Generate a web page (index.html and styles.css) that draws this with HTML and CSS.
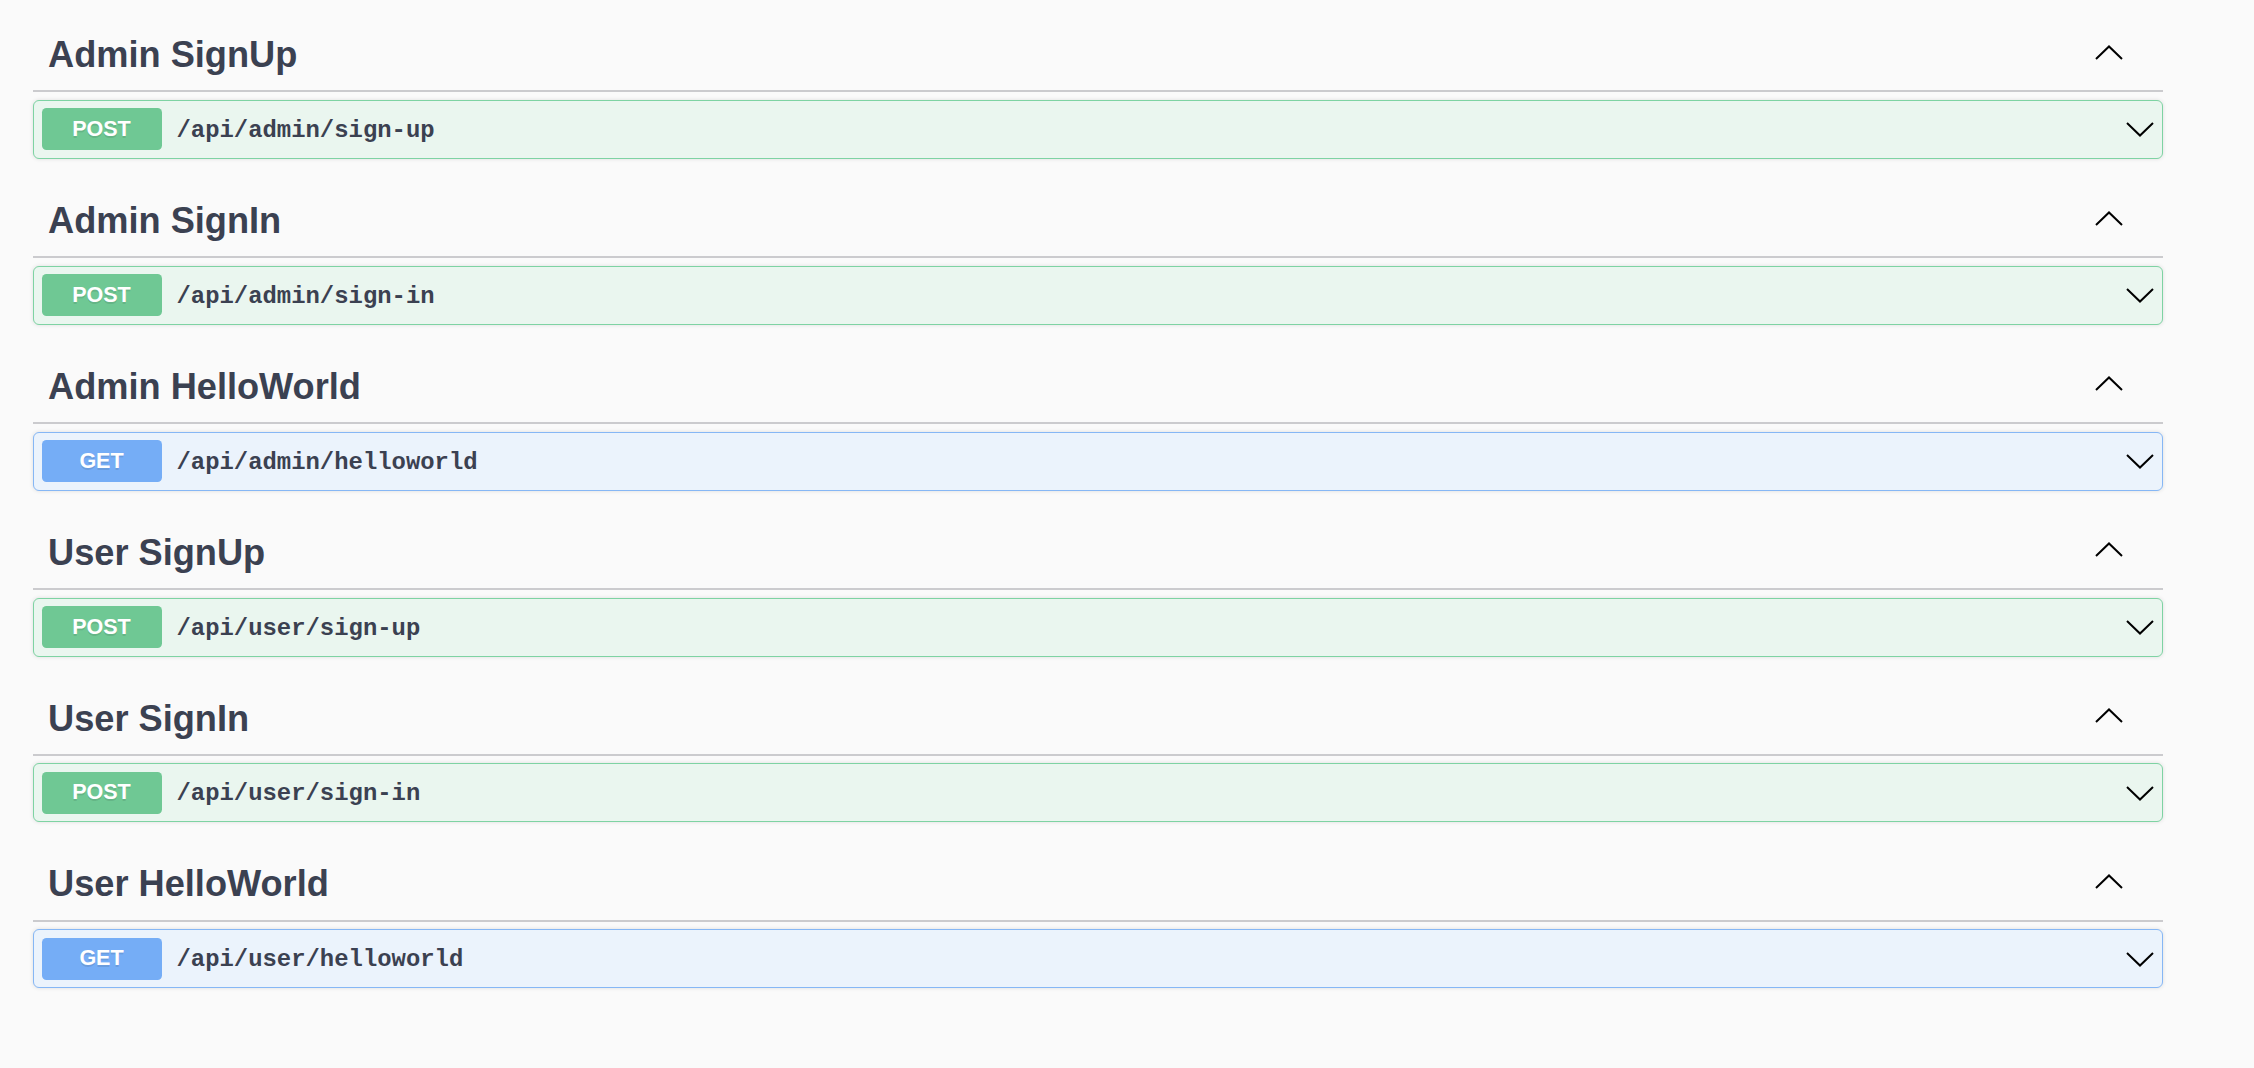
FILE: index.html
```html
<!DOCTYPE html>
<html lang="en">
<head>
<meta charset="utf-8">
<title>API</title>
<link rel="stylesheet" href="styles.css">
</head>
<body>
<div class="wrapper">
  <section class="tag-section">
    <h3 class="tag"><span class="tag-name">Admin SignUp</span><span class="tag-arrow"><svg width="28" height="15" viewBox="0 0 28 15"><polyline points="1,14 14,1.5 27,14" fill="none" stroke="#000" stroke-width="2"/></svg></span></h3>
    <div class="opblock post"><span class="method">POST</span><span class="path">/api/admin/sign-up</span><span class="op-arrow"><svg width="28" height="15" viewBox="0 0 28 15"><polyline points="1,1 14,13.5 27,1" fill="none" stroke="#000" stroke-width="2"/></svg></span></div>
  </section>
  <section class="tag-section">
    <h3 class="tag"><span class="tag-name">Admin SignIn</span><span class="tag-arrow"><svg width="28" height="15" viewBox="0 0 28 15"><polyline points="1,14 14,1.5 27,14" fill="none" stroke="#000" stroke-width="2"/></svg></span></h3>
    <div class="opblock post"><span class="method">POST</span><span class="path">/api/admin/sign-in</span><span class="op-arrow"><svg width="28" height="15" viewBox="0 0 28 15"><polyline points="1,1 14,13.5 27,1" fill="none" stroke="#000" stroke-width="2"/></svg></span></div>
  </section>
  <section class="tag-section">
    <h3 class="tag"><span class="tag-name">Admin HelloWorld</span><span class="tag-arrow"><svg width="28" height="15" viewBox="0 0 28 15"><polyline points="1,14 14,1.5 27,14" fill="none" stroke="#000" stroke-width="2"/></svg></span></h3>
    <div class="opblock get"><span class="method">GET</span><span class="path">/api/admin/helloworld</span><span class="op-arrow"><svg width="28" height="15" viewBox="0 0 28 15"><polyline points="1,1 14,13.5 27,1" fill="none" stroke="#000" stroke-width="2"/></svg></span></div>
  </section>
  <section class="tag-section">
    <h3 class="tag"><span class="tag-name">User SignUp</span><span class="tag-arrow"><svg width="28" height="15" viewBox="0 0 28 15"><polyline points="1,14 14,1.5 27,14" fill="none" stroke="#000" stroke-width="2"/></svg></span></h3>
    <div class="opblock post"><span class="method">POST</span><span class="path">/api/user/sign-up</span><span class="op-arrow"><svg width="28" height="15" viewBox="0 0 28 15"><polyline points="1,1 14,13.5 27,1" fill="none" stroke="#000" stroke-width="2"/></svg></span></div>
  </section>
  <section class="tag-section">
    <h3 class="tag"><span class="tag-name">User SignIn</span><span class="tag-arrow"><svg width="28" height="15" viewBox="0 0 28 15"><polyline points="1,14 14,1.5 27,14" fill="none" stroke="#000" stroke-width="2"/></svg></span></h3>
    <div class="opblock post"><span class="method">POST</span><span class="path">/api/user/sign-in</span><span class="op-arrow"><svg width="28" height="15" viewBox="0 0 28 15"><polyline points="1,1 14,13.5 27,1" fill="none" stroke="#000" stroke-width="2"/></svg></span></div>
  </section>
  <section class="tag-section">
    <h3 class="tag"><span class="tag-name">User HelloWorld</span><span class="tag-arrow"><svg width="28" height="15" viewBox="0 0 28 15"><polyline points="1,14 14,1.5 27,14" fill="none" stroke="#000" stroke-width="2"/></svg></span></h3>
    <div class="opblock get"><span class="method">GET</span><span class="path">/api/user/helloworld</span><span class="op-arrow"><svg width="28" height="15" viewBox="0 0 28 15"><polyline points="1,1 14,13.5 27,1" fill="none" stroke="#000" stroke-width="2"/></svg></span></div>
  </section>
</div>
</body>
</html>
```

FILE: styles.css
```css
html, body {
  margin: 0;
  padding: 0;
  background: #fafafa;
}
body {
  font-family: "Liberation Sans", Arial, sans-serif;
  color: #3b4151;
}
.wrapper {
  width: 2130px;
  margin-left: 33px;
  padding-top: 15px;
}
.tag-section {
  display: flex;
  flex-direction: column;
}
.tag {
  display: flex;
  align-items: center;
  margin: 0 0 7.5px 0;
  padding: 16px 40px 14px 15px;
  border-bottom: 2px solid #cbcbce;
  height: 45.4px;
  box-sizing: content-box;
}
.tag-name {
  flex: 1;
  font-size: 36.2px;
  font-weight: bold;
  line-height: 45.4px;
  padding-top: 2px;
  color: #3b4151;
}
.tag-arrow {
  display: flex;
  margin-top: -3px;
}
.tag-arrow svg, .op-arrow svg {
  display: block;
}
.opblock {
  display: flex;
  align-items: center;
  margin-bottom: 22px;
  padding: 7.5px;
  border: 1.5px solid;
  border-radius: 6px;
  box-shadow: 0 0 4px rgba(0,0,0,0.12);
}
.opblock.post {
  background: #eaf6ef;
  border-color: #7ed3a3;
}
.opblock.get {
  background: #ebf3fc;
  border-color: #86b7f5;
}
.method {
  width: 120px;
  height: 42px;
  display: flex;
  align-items: center;
  justify-content: center;
  border-radius: 4.5px;
  color: #fff;
  font-size: 21.5px;
  font-weight: bold;
  text-shadow: 0 1.5px 0 rgba(0,0,0,0.1);
}
.post .method {
  background: #6fc894;
}
.get .method {
  background: #75adf6;
}
.path {
  flex: 1;
  padding-left: 15px;
  padding-top: 2px;
  font-family: "Liberation Mono", "Courier New", monospace;
  font-weight: bold;
  font-size: 23.9px;
  color: #3b4151;
}
.op-arrow {
  display: flex;
  margin-right: 1px;
  margin-top: 1px;
}
```
